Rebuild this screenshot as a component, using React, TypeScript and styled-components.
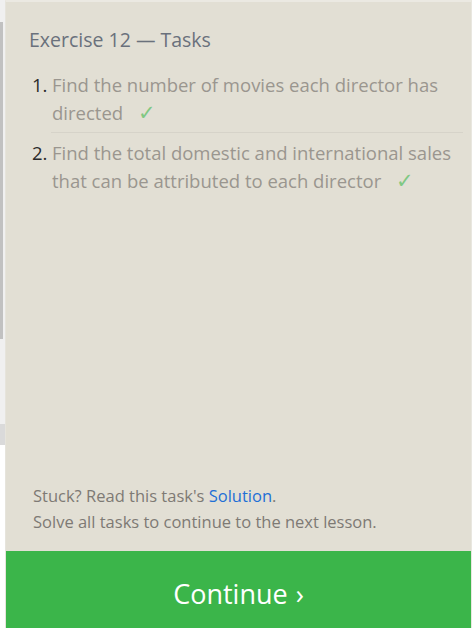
import React from "react";
import styled, { createGlobalStyle } from "styled-components";

const Global = createGlobalStyle`
  html, body { margin: 0; padding: 0; background: #ffffff; }
  body { font-family: "Open Sans", "Noto Sans", sans-serif; }
`;

const Page = styled.div`
  display: flex;
  width: 472px;
  height: 628px;
  overflow: hidden;
`;

const Gutter = styled.div`
  width: 5px;
  flex: none;
  display: flex;
  flex-direction: column;
  background: #f0f0f0;
`;

const GutterPiece = styled.div<{ $h: number; $bg: string; $w?: number }>`
  height: ${(p) => p.$h}px;
  width: ${(p) => p.$w ?? 5}px;
  background: ${(p) => p.$bg};
  flex: none;
`;

const Panel = styled.div`
  flex: 1;
  display: flex;
  flex-direction: column;
  background: #e2dfd4;
  border-top: 2px solid #ebe9e2;
  border-left: 1px solid #e6e4dc;
  border-right: 1px solid #e9e7e0;
`;

const Content = styled.div`
  flex: 1;
  padding: 25px 8px 0 23px;
  display: flex;
  flex-direction: column;
`;

const Title = styled.h2`
  margin: 0 0 18px 0;
  font-size: 19.5px;
  font-weight: 400;
  color: #6a717c;
  line-height: 26px;
`;

const List = styled.ol`
  margin: 0;
  padding: 0;
  list-style: none;
  display: flex;
  flex-direction: column;
`;

const Item = styled.li<{ $first?: boolean }>`
  display: flex;
  font-size: 18.5px;
  line-height: 28px;
  padding: ${(p) => (p.$first ? "0 0 5px 0" : "6px 0 0 0")};
`;

const Num = styled.span`
  width: 20px;
  flex: none;
  padding-left: 3px;
  color: #2b2b2b;
`;

const Body = styled.span`
  flex: 1;
  color: #9a968f;
`;

const Rule = styled.div`
  height: 1px;
  background: #d6d3c9;
  margin-left: 22px;
`;

const Check = styled.span`
  color: #80c883;
  margin-left: 15px;
  font-size: 21px;
  line-height: 1;
`;

const Footer = styled.div`
  padding: 0 0 16px 27px;
  font-size: 16.5px;
  line-height: 26px;
  color: #7e7a74;
`;

const Link = styled.a`
  color: #1f6fd6;
  text-decoration: none;
`;

const ContinueButton = styled.button`
  height: 77px;
  border: none;
  background: #3bb54a;
  color: #ffffff;
  font-family: "Open Sans", "Noto Sans", sans-serif;
  font-size: 27px;
  padding: 8px 0 0 0;
  display: flex;
  align-items: center;
  justify-content: center;
  gap: 8px;
  cursor: pointer;
`;

export default function App() {
  return (
    <>
      <Global />
      <Page>
        <Gutter>
          <GutterPiece $h={22} $bg="#f0f0f0" />
          <GutterPiece $h={317} $bg="#c1c1c1" $w={3} />
          <GutterPiece $h={85} $bg="#f0f0f0" />
          <GutterPiece $h={21} $bg="#dadada" />
          <GutterPiece $h={183} $bg="#ffffff" />
        </Gutter>
        <Panel>
          <Content>
            <Title>Exercise 12 — Tasks</Title>
            <List>
              <Item $first>
                <Num>1.</Num>
                <Body>
                  Find the number of movies each director has directed
                  <Check>✓</Check>
                </Body>
              </Item>
              <Rule />
              <Item>
                <Num>2.</Num>
                <Body>
                  Find the total domestic and international sales that can be
                  attributed to each director
                  <Check>✓</Check>
                </Body>
              </Item>
            </List>
          </Content>
          <Footer>
            Stuck? Read this task's <Link href="#">Solution</Link>.
            <br />
            Solve all tasks to continue to the next lesson.
          </Footer>
          <ContinueButton>
            Continue <span>›</span>
          </ContinueButton>
        </Panel>
      </Page>
    </>
  );
}
